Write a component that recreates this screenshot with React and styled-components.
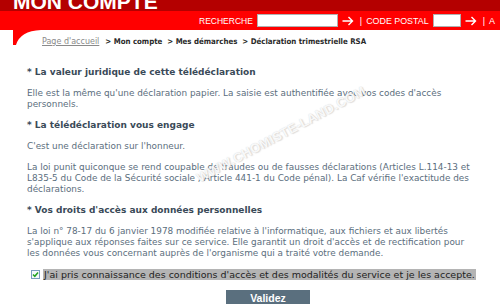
import React from "react";
import styled, { createGlobalStyle } from "styled-components";

const Global = createGlobalStyle`
  html, body { margin: 0; padding: 0; background: #ffffff; }
  body { width: 500px; height: 304px; overflow: hidden; }
`;

const Page = styled.div`
  position: relative;
  width: 500px;
  height: 304px;
  overflow: hidden;
  font-family: "DejaVu Sans", Verdana, sans-serif;
`;

const TopBand = styled.div`
  height: 11px;
  background: #b40000;
  overflow: hidden;
  padding-left: 13px;
`;

const Title = styled.div`
  font-family: "Liberation Sans", Arial, sans-serif;
  font-weight: bold;
  font-size: 21px;
  line-height: 21px;
  color: #ffffff;
  margin-top: -9px;
  white-space: nowrap;
`;

const NavBar = styled.div`
  height: 19px;
  background: #ff0000;
  display: flex;
  align-items: center;
  padding-left: 199px;
  white-space: nowrap;
  font-family: "Liberation Sans", Arial, sans-serif;
  font-size: 9px;
  color: #ffffff;
`;

const NavLabel = styled.span`
  font-size: ${(p) => p.$size || 9}px;
  margin-right: ${(p) => p.$mr || 0}px;
`;

const NavInput = styled.div`
  box-sizing: border-box;
  width: ${(p) => p.$w}px;
  height: 13px;
  background: #ffffff;
  border: 1px solid #b0b0b0;
  margin-right: 4px;
`;

const Arrow = styled.svg`
  width: 12px;
  height: 10px;
  margin-right: 6px;
`;

const Sep = styled.span`
  margin-right: 4px;
`;

const CrumbRow = styled.div`
  display: flex;
  align-items: flex-start;
  height: 20px;
`;

const Tab = styled.svg`
  width: 42px;
  height: 16px;
  flex: none;
`;

const Crumbs = styled.div`
  display: flex;
  align-items: baseline;
  margin-top: 7px;
  white-space: nowrap;
  line-height: 9px;
`;

const HomeLink = styled.span`
  font-size: 8px;
  color: #8a8a8a;
  text-decoration: underline;
  margin-right: 6px;
`;

const Crumb = styled.span`
  font-family: "DejaVu Sans Condensed", "DejaVu Sans", sans-serif;
  font-size: 7.8px;
  font-weight: bold;
  color: #2a2a2a;
  margin-right: ${(p) => p.$mr || 0}px;
`;

const Content = styled.div`
  padding: 17px 0 0 27px;
`;

const Heading = styled.div`
  font-size: 9px;
  line-height: 11px;
  font-weight: bold;
  color: #3a4a58;
  margin-bottom: 10px;
  white-space: nowrap;
`;

const Para = styled.p`
  margin: 0 0 10px 0;
  font-size: 8.9px;
  line-height: 11px;
  color: #5b6e7d;
  white-space: nowrap;
`;

const CheckRow = styled.div`
  display: flex;
  align-items: center;
  gap: 3px;
  margin-left: 4px;
  height: 11px;
`;

const Check = styled.svg`
  width: 9px;
  height: 9px;
  flex: none;
`;

const Accept = styled.span`
  background: #b4b4b4;
  color: #222222;
  font-size: 9.5px;
  line-height: 11px;
  padding: 0 1px;
  white-space: nowrap;
`;

const Button = styled.div`
  margin: 10px 0 0 199px;
  width: 84px;
  height: 20px;
  background: #5a6f7e;
  color: #ffffff;
  font-family: "Liberation Sans", Arial, sans-serif;
  font-weight: bold;
  font-size: 10.5px;
  text-align: center;
  line-height: 16px;
`;

const Watermark = styled.div`
  position: absolute;
  left: 194px;
  top: 172px;
  transform: rotate(-28deg);
  transform-origin: left top;
  font-family: "Liberation Sans", Arial, sans-serif;
  font-weight: bold;
  font-size: 13px;
  letter-spacing: 0.3px;
  color: rgba(255, 255, 255, 0.9);
  text-shadow: 0 0 1px rgba(140, 140, 140, 0.4), 1px 1px 1px rgba(160, 160, 160, 0.3);
  white-space: nowrap;
  pointer-events: none;
`;

const ArrowIcon = () => (
  <Arrow viewBox="0 0 12 10">
    <path d="M0.5 5 H10.5 M6.5 1 L10.5 5 L6.5 9" stroke="#fff" strokeWidth="1.4" fill="none" />
  </Arrow>
);

export default function App() {
  return (
    <Page>
      <Global />
      <TopBand>
        <Title>MON COMPTE</Title>
      </TopBand>
      <NavBar>
        <NavLabel $mr={4} $size={8.5}>RECHERCHE</NavLabel>
        <NavInput $w={81} />
        <ArrowIcon />
        <Sep>|</Sep>
        <NavLabel $mr={4} $size={8.9}>CODE POSTAL</NavLabel>
        <NavInput $w={28} />
        <ArrowIcon />
        <Sep>|</Sep>
        <NavLabel>A</NavLabel>
      </NavBar>
      <CrumbRow>
        <Tab viewBox="0 0 42 16">
          <path d="M13 0 H41 Q20 1 16 15 H13 Z" fill="#ff0000" />
        </Tab>
        <Crumbs>
          <HomeLink>Page d'accueil</HomeLink>
          <Crumb $mr={5}>&gt; Mon compte</Crumb>
          <Crumb $mr={5}>&gt; Mes démarches</Crumb>
          <Crumb>&gt; Déclaration trimestrielle RSA</Crumb>
        </Crumbs>
      </CrumbRow>
      <Content>
        <Heading>* La valeur juridique de cette télédéclaration</Heading>
        <Para>
          Elle est la même qu'une déclaration papier. La saisie est authentifiée avec vos codes d'accès
          <br />
          personnels.
        </Para>
        <Heading>* La télédéclaration vous engage</Heading>
        <Para>C'est une déclaration sur l'honneur.</Para>
        <Para>
          La loi punit quiconque se rend coupable de fraudes ou de fausses déclarations (Articles L.114-13 et
          <br />
          L835-5 du Code de la Sécurité sociale ; Article 441-1 du Code pénal). La Caf vérifie l'exactitude des
          <br />
          déclarations.
        </Para>
        <Heading>* Vos droits d'accès aux données personnelles</Heading>
        <Para>
          La loi n° 78-17 du 6 janvier 1978 modifiée relative à l'informatique, aux fichiers et aux libertés
          <br />
          s'applique aux réponses faites sur ce service. Elle garantit un droit d'accès et de rectification pour
          <br />
          les données vous concernant auprès de l'organisme qui a traité votre demande.
        </Para>
        <CheckRow>
          <Check viewBox="0 0 9 9">
            <rect x="0.5" y="0.5" width="8" height="8" fill="#f4f8fc" stroke="#7a9cc0" />
            <path d="M2 4.5 L3.8 6.3 L7 2.5" stroke="#21a121" strokeWidth="1.5" fill="none" />
          </Check>
          <Accept>J'ai pris connaissance des conditions d'accès et des modalités du service et je les accepte.</Accept>
        </CheckRow>
        <Button>Validez</Button>
      </Content>
      <Watermark>WWW.CHOMISTE-LAND.COM</Watermark>
    </Page>
  );
}
